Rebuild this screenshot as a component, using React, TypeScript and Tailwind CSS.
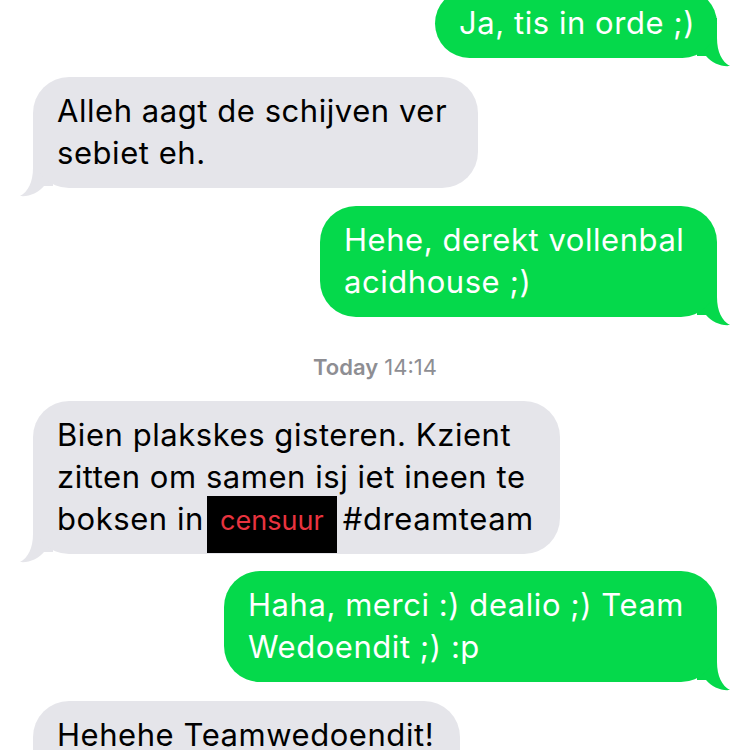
import React from 'react'

type Side = 'me' | 'them'

function Tail({ side }: { side: Side }) {
  const color = side === 'me' ? 'fill-[#05d94b]' : 'fill-[#e5e5ea]'
  return (
    <svg
      viewBox="0 0 46 50"
      className={
        side === 'me'
          ? 'absolute right-[-16px] bottom-[-10px] w-[46px] h-[50px]'
          : 'absolute left-[-16px] bottom-[-10px] w-[46px] h-[50px] -scale-x-100'
      }
    >
      <path className={color} d="M10 0 H30 V20 C30 34 35 44 43 48 C34 49 25 45 19 38 L10 38 Z" />
    </svg>
  )
}

function Bubble({ side, className, children }: { side: Side; className: string; children: React.ReactNode }) {
  const me = side === 'me'
  return (
    <div className={`relative ${me ? 'self-end' : 'self-start'} ${className}`}>
      <Tail side={side} />
      <div
        className={`relative rounded-[36px] px-[24px] pt-[13px] pb-[14px] whitespace-nowrap ${
          me ? 'bg-[#05d94b] text-white' : 'bg-[#e5e5ea] text-black'
        }`}
      >
        {children}
      </div>
    </div>
  )
}

export default function App() {
  return (
    <div className="w-[750px] h-[750px] overflow-hidden bg-white font-['Inter','Noto_Sans',sans-serif] text-[31px] leading-[42px] tracking-[0.55px]">
      <div className="flex flex-col px-[33px]">
        {/* messages */}
        <Bubble side="me" className="w-[282px] -mt-[11px]">
          Ja, tis in orde ;)
        </Bubble>

        <Bubble side="them" className="w-[445px] mt-[19px]">
          Alleh aagt de schijven ver
          <br />
          sebiet eh.
        </Bubble>

        <Bubble side="me" className="w-[397px] mt-[18px]">
          Hehe, derekt vollenbal
          <br />
          acidhouse ;)
        </Bubble>

        <div className="mt-[37px] mb-[21px] text-center text-[22px] leading-[26px] tracking-normal text-[#8e8e93]">
          <span className="font-semibold">Today</span> 14:14
        </div>

        <Bubble side="them" className="w-[527px]">
          Bien plakskes gisteren. Kzient
          <br />
          zitten om samen isj iet ineen te
          <br />
          boksen in
          <span className="inline-block w-[130px] h-[57px] ml-[3px] mr-[6px] -mt-[2px] -mb-[14px] bg-black text-center text-[#e8333f] text-[27px] leading-[27px] tracking-normal pt-[11px]">
            censuur
          </span>
          #dreamteam
        </Bubble>

        <Bubble side="me" className="w-[493px] mt-[17px]">
          Haha, merci :) dealio ;) Team
          <br />
          Wedoendit ;) :p
        </Bubble>

        <Bubble side="them" className="w-[427px] mt-[19px]">
          Hehehe Teamwedoendit!
          <br />
          &nbsp;
        </Bubble>
      </div>
    </div>
  )
}
